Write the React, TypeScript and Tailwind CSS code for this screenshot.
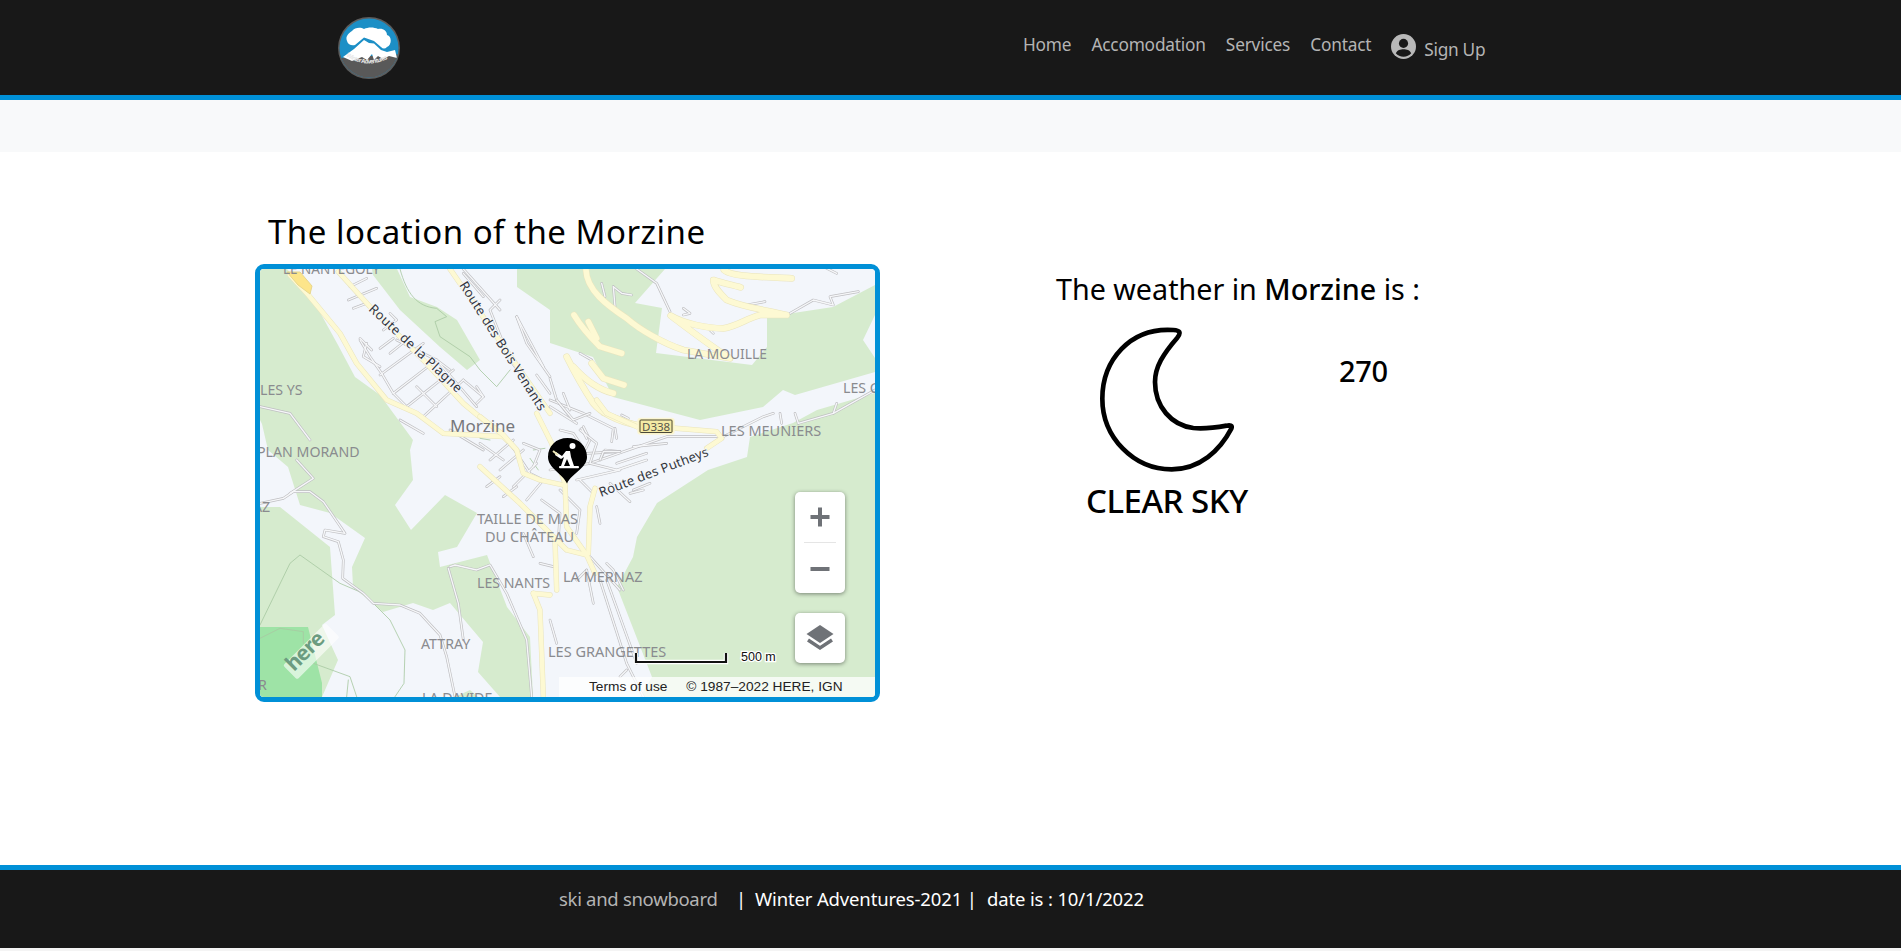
import React from "react";

const z = (x: number, y: number) => `translate(${x} ${y}) scale(0.33333)`;

function Roads({ t, gray = [], yellow = [], trail = [], yw = 13 }: { t: string; gray?: string[]; yellow?: string[]; trail?: string[]; yw?: number }) {
  const common = { fill: "none", strokeLinejoin: "round" as const, strokeLinecap: "round" as const };
  return (
    <g transform={t} {...common}>
      {trail.map((d, i) => <path key={"t" + i} d={d} stroke="#a8c9a2" strokeWidth={2.5} />)}
      {gray.map((d, i) => <path key={"a" + i} d={d} stroke="#bfbfc2" strokeWidth={8} />)}
      {gray.map((d, i) => <path key={"b" + i} d={d} stroke="#f6f7f9" strokeWidth={4} />)}
      {yellow.map((d, i) => <path key={"c" + i} d={d} stroke="#e9e4bd" strokeWidth={yw + 3} />)}
      {yellow.map((d, i) => <path key={"d" + i} d={d} stroke="#fdf9d3" strokeWidth={yw} />)}
    </g>
  );
}

function Label({ x, y, s = 14.2, children, fill = "#8a8b8f", weight = 400 }: { x: number; y: number; s?: number; children: React.ReactNode; fill?: string; weight?: number }) {
  return <text x={x} y={y} fontSize={s} fill={fill} fontWeight={weight} fontFamily="'Noto Sans', sans-serif">{children}</text>;
}

function RoadLabel({ x, y, a, len, children }: { x: number; y: number; a: number; len: number; children: string }) {
  return (
    <text transform={`translate(${x} ${y}) rotate(${a})`} fontSize={13} fill="#33363d" fontFamily="'Noto Sans', sans-serif" textLength={len} lengthAdjust="spacing" stroke="#f3f6fb" strokeWidth={2} paintOrder="stroke">
      {children}
    </text>
  );
}

function MapArt() {
  return (
    <svg className="block w-full h-full" viewBox="260 269 615 428">
      <rect x="260" y="269" width="615" height="428" fill="#f3f6fb" />
      <g fill="#d6ebce">
        <polygon points="260,269 287,269 311,296 338,345 355,377 380,395 413,440 410,450 413,480 395,505 411,530 445,495 477,513 457,547 438,552 440,567 487,555 507,607 530,637 533,697 500,697 478,672 483,642 450,603 433,610 413,603 383,612 353,587 352,567 365,538 330,513 300,505 288,467 268,450 262,424 260,420" />
        <polygon points="260,507 280,507 330,547 335,615 322,625 338,660 322,697 260,697" />
        <polygon points="372,269 373,275 400,310 440,347 467,370 480,360 457,320 437,307 410,297 397,269" />
        <polygon points="517,269 517,287 550,310 550,343 593,357 613,397 700,420 763,407 783,390 795,395 875,372 875,358 863,340 875,315 875,285 833,307 767,317 767,347 752,365 656,353 662,308 635,303 665,269" />
        <polygon points="875,393 817,410 793,423 750,437 747,457 708,470 657,503 637,537 633,557 617,587 652,677 640,697 875,697" />
        <polygon points="455,697 470,690 478,697" />
      </g>
      <polygon points="260,627 308,627 322,683 322,697 260,697" fill="#9ee3a6" />

      <Roads
        t={z(250, 200)}
        trail={["M450 207 C470 280 500 320 560 325 L590 350 L555 365 L570 410 L660 470 L690 510 L740 560 L780 510"]}
        gray={[
          "M330 420 L360 470 L395 520 L430 580 L470 620",
          "M390 525 L520 430", "M430 580 L560 480", "M470 620 L610 510", "M520 650 L640 540", "M560 480 L680 620",
          "M295 300 L380 265", "M310 325 L350 310", "M300 260 L350 235", "M390 445 L430 415", "M420 460 L470 420", "M330 415 L365 450",
          "M800 350 L830 430 L900 530", "M750 300 L720 330 L780 480 L870 600", "M30 620 L120 640 L180 720",
          "M450 660 L520 700", "M640 207 L750 330", "M680 560 L700 590 L680 610", "M860 525 L900 580", "M600 690 L700 750",
          "M350 430 L340 470 L390 500", "M420 340 L440 360 L400 390", "M640 220 L700 290",
          "M440 420 L560 480 L600 510", "M500 560 L560 620", "M640 540 L700 590", "M800 350 L880 500",
        ]}
        yellow={[
          "M265 215 L360 320 L520 480 L640 610 L700 660",
          "M120 225 L175 285 L270 400 L320 490 L410 600 L500 640 L580 700 L760 710 L800 750",
          "M600 207 L900 640",
        ]}
      />
      <path d="M287 272 L298 285 L310 294 L312 286 L300 272 Z" fill="#fde58a" stroke="#e7d68c" />

      <Roads
        t={z(550, 250)}
        gray={[
          "M260 57 L320 100 L360 185", "M155 100 L165 140", "M190 110 L195 170", "M190 110 L215 130 L245 135", "M720 190 L790 150 L850 165 L840 140 L925 125",
          "M400 175 L420 190 L400 195", "M590 165 L645 155", "M0 450 L100 490 L190 535 L185 575", "M215 495 L235 505", "M0 385 L20 450 L60 500",
          "M520 560 L640 500 L670 490", "M690 490 L695 520", "M735 490 L745 520", "M745 520 L850 490 L860 460", "M850 490 L975 420", "M0 660 L120 640 L350 560 L510 560",
          "M250 590 L350 580", "M110 610 L210 605", "M100 530 L120 570 L100 610", "M155 620 L165 600 L210 605", "M90 310 L125 330", "M40 430 L60 480", "M830 55 L860 70",
          "M480 240 L490 250", "M0 470 L80 520", "M200 640 L290 610",
        ]}
        yellow={["M160 490 L260 525 L500 545 L515 565 L470 595"]}
      />
      <Roads
        t={z(550, 250)}
        yw={17}
        yellow={[
          "M108 60 C110 120 170 165 230 205 C270 240 340 280 400 300 L540 325 C470 280 400 225 362 197 C400 220 470 235 520 235 C560 230 590 205 630 195 L710 195 C650 180 590 175 530 150 C510 130 490 110 490 90 C520 100 550 105 572 112",
          "M522 60 C545 80 620 80 725 85",
          "M72 195 C90 225 120 260 150 290 L215 310",
          "M115 215 L140 265",
          "M50 320 C75 370 90 400 130 460 C150 485 200 515 262 525",
          "M125 340 L160 385 L222 405",
          "M70 350 C110 395 150 420 190 430",
        ]}
      />
      <Roads
        t={z(480, 400)}
        gray={[
          "M90 130 L150 220 L190 240", "M30 180 L100 120", "M60 210 L130 150", "M100 260 L170 190", "M140 300 L190 240", "M0 130 L70 180", "M185 300 L240 340 L235 420",
          "M330 190 L410 210 L500 180", "M290 240 L420 210", "M300 90 L350 130 L330 190", "M360 180 L370 155 L420 155", "M240 90 L280 100 L300 130", "M305 85 L320 115", "M405 85 L410 115",
          "M240 270 L300 330 L290 400", "M350 320 L360 370", "M450 280 L490 270", "M130 400 L160 470", "M320 510 L290 540", "M180 490 L220 500",
          "M380 490 L400 510 L430 570", "M330 470 L420 570", "M130 130 L180 150 L160 200", "M20 260 L60 230", "M70 290 L110 260", "M340 280 L300 240", "M230 0 L280 60 L330 40",
        ]}
        trail={["M0 115 L30 120", "M160 150 L195 145", "M150 175 L175 210"]}
        yellow={[
          "M0 50 L70 105 L110 150 L130 220 L180 240 L250 255",
          "M170 40 L215 130 L255 250 L260 380 L320 465 L345 520",
          "M0 200 L120 310 L260 450 L320 465",
          "M225 420 L230 570",
          "M345 265 L330 320 L325 460",
          "M350 0 L380 40 L470 80",
        ]}
      />
      <Roads
        t={z(250, 450)}
        trail={[
          "M30 565 L90 535 L160 545 L160 580", "M30 525 L120 340 L150 315 L270 400 L340 430 L420 510 L465 600 L462 700 L435 740", "M190 640 L300 680 L320 740", "M290 740 L295 690",
        ]}
        gray={[
          "M30 160 L100 145 L130 125 L180 125 L220 155 L285 250 L225 240 L220 260 L265 275 L280 330 L278 385 L340 430 L370 460 L450 465 L510 490 L570 555 L590 620 L615 740",
          "M140 30 L190 85 L120 130", "M600 350 L615 345 L680 360 L720 345 L770 430 L830 570 L845 740", "M595 355 L625 460 L640 570",
        ]}
        yellow={["M850 430 L870 480 L880 740", "M850 430 L900 435"]}
      />
      <Roads
        t={z(550, 470)}
        gray={["M150 330 L230 580 L280 680", "M170 330 L260 580", "M110 300 L130 400", "M0 450 L20 520", "M230 600 L210 620", "M180 40 L240 95", "M250 60 L300 40"]}
      />

      <g fill="#ffffff" fillOpacity={0.6} transform="rotate(-45 312 652)">
        <rect x="282" y="641" width="60" height="20" rx="2" />
      </g>
      <text transform="translate(294 672) rotate(-45)" fontSize={21} fontWeight={700} fill="#6c9c80" fontFamily="'Noto Sans', sans-serif" letterSpacing={-0.8}>here</text>

      <Label x={283} y={274} s={13.5}>LE NANTEGOLY</Label>
      <Label x={260} y={395}>LES YS</Label>
      <Label x={450} y={432} s={17} fill="#77787c">Morzine</Label>
      <Label x={257} y={457}>PLAN MORAND</Label>
      <Label x={253} y={512}>AZ</Label>
      <Label x={687} y={359} s={13.8}>LA MOUILLE</Label>
      <Label x={843} y={393}>LES C</Label>
      <Label x={721} y={436} s={14.5}>LES MEUNIERS</Label>
      <Label x={477} y={524} s={14.5}>TAILLE DE MAS</Label>
      <Label x={485} y={542} s={14.5}>DU CHÂTEAU</Label>
      <Label x={477} y={588}>LES NANTS</Label>
      <Label x={563} y={582} s={14.5}>LA MERNAZ</Label>
      <Label x={421} y={649}>ATTRAY</Label>
      <Label x={548} y={657} s={14.5}>LES GRANGETTES</Label>
      <Label x={422} y={703}>LA DAVIDE</Label>
      <Label x={258} y={690}>R</Label>

      <rect x="638" y="418.500" width="36" height="15.500" rx="2.500" fill="#f4eaa4" stroke="#fbf6d5" strokeWidth={1.500} />
      <rect x="640" y="420" width="32" height="12.500" rx="1" fill="none" stroke="#4c4a3a" strokeWidth={1} />
      <Label x={642} y={431} s={11.500} fill="#55534a">D338</Label>

      <RoadLabel x={368} y={310} a={43} len={122}>Route de la Plagne</RoadLabel>
      <RoadLabel x={459} y={285} a={57.6} len={150}>Route des Bois Venants</RoadLabel>
      <RoadLabel x={601} y={497} a={-21} len={116}>Route des Putheys</RoadLabel>

      <path d="M567 483.500 C562 473 548 468 548 457 C548 446 556 438 567.500 438 C579 438 587 446 587 457 C587 468 572 473 567 483.500 Z" fill="#000" />
      <circle cx="572.500" cy="446" r="3" fill="#fff" />
      <path d="M556 452 L562 456 L566 451 L570 451 L571 457 L574 466 L570 466 L567 459 L564 466 L561 466 L564 457 L561 459 L555 455 Z" fill="#fff" />
      <rect x="559" y="466" width="20" height="2.200" rx="1" fill="#fff" />
      <path d="M553 451 L558 455" stroke="#efe9b8" strokeWidth={2} />

      <polyline points="636,653 636,662 726,662 726,653" fill="none" stroke="#fff" strokeWidth={4.500} />
      <polyline points="636,653 636,662 726,662 726,653" fill="none" stroke="#111" strokeWidth={2.200} />
      <text x="741" y="661" fontSize={12.500} fill="#111" stroke="#fff" strokeWidth={2.500} paintOrder="stroke" fontFamily="'Liberation Sans', sans-serif">500 m</text>
    </svg>
  );
}

function Logo() {
  return (
    <svg width="64" height="64" viewBox="0 0 64 64" className="block">
      <defs>
        <clipPath id="lc"><circle cx="32" cy="32" r="29.500" /></clipPath>
        <path id="lt" d="M9 40 Q32 55 55 40" />
      </defs>
      <circle cx="32" cy="32" r="31" fill="#5c5c5c" />
      <g clipPath="url(#lc)">
        <rect width="64" height="64" fill="#1c8fc6" />
        <path d="M0 42 L64 38 L64 64 L0 64 Z" fill="#595959" />
        <path d="M10 25 C8 20 12 17 15 15 C18 11 24 11 27 13 C31 11 37 11 41 13 C46 12 50 15 50 19 C55 20 55 29 50 31 C48 33 46 33 44 31 L37 25 L27 21.500 L18 29 C15 30 11 29 10 25 Z" fill="#fff" />
        <path d="M6 41 L17 33 L27 24 L32 27 L37 27.500 L44 34 L50 36 L58 34 L60 42 L52 40 L46 43 L41 40 L37 44 L35 38 L30 44 L25 41 L15 45 Z" fill="#fff" />
      </g>
      <text fontSize={6} fill="#e8e8e8" fontWeight={700} fontFamily="'Noto Sans', sans-serif"><textPath href="#lt" textLength="44">Winter Adventures</textPath></text>
    </svg>
  );
}

function Moon() {
  return (
    <svg width="134" height="145" viewBox="180 200 402 435" className="block">
      <path d="M400 209 C270 200 187 300 187 415 C187 530 280 627 395 627 C480 627 540 570 574 505 C578 495 570 494 560 496 C520 503 480 505 460 503 C395 495 345 440 345 365 C345 320 370 280 412 232 C425 215 418 210 400 209 Z" fill="none" stroke="#000" strokeWidth={14} strokeLinejoin="round" />
    </svg>
  );
}

export default function App() {
  const link = "text-[17.3px] leading-[24px] text-[#b4b4b4] tracking-[-0.2px]";
  return (
    <div className="h-[951px] flex flex-col bg-white font-['Noto_Sans',sans-serif] overflow-hidden">
      <header className="h-[100px] shrink-0 bg-[#181818] border-b-[5px] border-[#0090d7] flex items-start pl-[337px] pt-[16px]">
        <Logo />
        <nav className="ml-[622px] flex items-start pt-[17px] gap-[20px]">
          <a className={link}>Home</a>
          <a className={link}>Accomodation</a>
          <a className={link}>Services</a>
          <a className={link}>Contact</a>
          <a className={`${link} flex items-start mt-[1px]`}>
            <svg width="25" height="25" viewBox="0 0 24 24" className="block">
              <circle cx="12" cy="12" r="12" fill="#b8b8b8" />
              <circle cx="12" cy="9" r="4.400" fill="#181818" />
              <path d="M4.600 18.400 C6 15.400 9 14.600 12 14.600 C15 14.600 18 15.400 19.400 18.400 C17.600 20.500 15 21.800 12 21.800 C9 21.800 6.400 20.500 4.600 18.400 Z" fill="#181818" />
            </svg>
            <span className="ml-[8px] mt-[4px] tracking-[-0.3px]">Sign Up</span>
          </a>
        </nav>
      </header>
      <div className="h-[52px] shrink-0 bg-[#f8f9fa]" />
      <main className="flex-1 flex pl-[255px] items-start">
        <section className="w-[625px] shrink-0">
          <h2 className="mt-[58px] ml-[13px] h-[54px] text-[33px] leading-[44px] text-black tracking-[0.5px] whitespace-nowrap">The location of the Morzine</h2>
          <div className="relative w-[625px] h-[438px] border-[5px] border-[#0090d7] rounded-[9px] overflow-hidden">
            <MapArt />
            <div className="absolute left-[535px] top-[223px] w-[50px] h-[101px] bg-white rounded-[5px] shadow-[0_1px_4px_rgba(0,0,0,0.45)] flex flex-col items-center">
              <svg width="50" height="50" viewBox="0 0 50 50" className="block"><path d="M25 15.500 V34.500 M15.500 25 H34.500" stroke="#6f7277" strokeWidth={4} /></svg>
              <div className="w-[32px] h-[1px] bg-[#e5e5e5]" />
              <svg width="50" height="50" viewBox="0 0 50 50" className="block"><path d="M15.500 26 H34.500" stroke="#6f7277" strokeWidth={4} /></svg>
            </div>
            <div className="absolute left-[535px] top-[344px] w-[50px] h-[50px] bg-white rounded-[5px] shadow-[0_1px_4px_rgba(0,0,0,0.45)]">
              <svg width="50" height="50" viewBox="0 0 50 50" className="block">
                <path d="M25 12 L38.500 21 L25 30 L11.500 21 Z" fill="#6f7277" />
                <path d="M13 27 L25 35 L37 27" fill="none" stroke="#6f7277" strokeWidth={3.500} />
              </svg>
            </div>
            <div className="absolute left-[299px] right-0 bottom-0 h-[20px] bg-white/75 font-['Liberation_Sans',sans-serif] text-[13.7px] leading-[20px] text-[#222] flex pl-[30px] whitespace-nowrap">
              <span>Terms of use</span>
              <span className="ml-[19px]">© 1987–2022 HERE, IGN</span>
            </div>
          </div>
        </section>
        <section className="ml-[176px] pt-[116px] relative">
          <p className="text-[28.7px] leading-[42px] text-black whitespace-nowrap">
            The weather in <span className="font-medium">Morzine</span> is :
          </p>
          <div className="flex items-start mt-[2px]">
            <div className="w-[283px] shrink-0 pl-[44px] pt-[15px]">
              <Moon />
            </div>
            <div className="text-[29px] leading-[36px] font-medium text-black mt-[41px] tracking-[-0.3px]">270</div>
          </div>
          <div className="mt-[8px] ml-[30px] text-[33px] leading-[42px] font-medium text-black tracking-[-0.5px] whitespace-nowrap">CLEAR SKY</div>
        </section>
      </main>
      <footer className="h-[83px] shrink-0 bg-[#181818] border-t-[5px] border-[#0090d7] pl-[559px] pt-[17px] text-[18.5px] leading-[24px] flex text-white tracking-[-0.15px] whitespace-nowrap">
        <span className="text-[#b4b4b4] w-[177px] tracking-[-0.3px]">ski and snowboard</span>
        <span className="w-[19px]">|</span>
        <span className="w-[232px]">Winter Adventures-2021 |</span>
        <span>date is : 10/1/2022</span>
      </footer>
      <div className="h-[3px] shrink-0 bg-[#f4f4f4]" />
    </div>
  );
}
